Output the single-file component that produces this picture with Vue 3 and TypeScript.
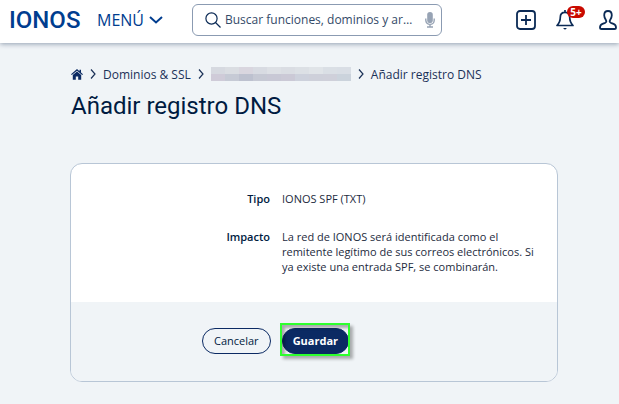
<script setup lang="ts">
import { ref } from 'vue'

const query = ref('')
const maskedCells: string[] = [
  '#d6d9e0', '#dadde2', '#d9d6df', '#d8dbe2', '#dde0e5', '#dadde3', '#dce0e5', '#e0e4e8', '#dadfe5', '#d9dee5',
  '#cfcbd8', '#c6cad5', '#bdc1cf', '#c6c9d4', '#c8c8d5', '#cbc9d6', '#cdd1dc', '#ced0da', '#cfd0da', '#cbd3dc',
]
const record: { label: string; value: string }[] = [
  { label: 'Tipo', value: 'IONOS SPF (TXT)' },
  {
    label: 'Impacto',
    value: 'La red de IONOS será identificada como el remitente legítimo de sus correos electrónicos. Si ya existe una entrada SPF, se combinarán.',
  },
]
</script>

<template>
  <div class="page">
    <header class="topbar">
      <a href="#" class="logo">IONOS</a>
      <button type="button" class="menu">
        MENÚ
        <svg width="14" height="8" viewBox="0 0 14 8"><path d="M1 1l6 5.5L13 1" fill="none" stroke="currentColor" stroke-width="2" /></svg>
      </button>
      <label class="search">
        <svg width="16" height="16" viewBox="0 0 16 16" fill="none" stroke="#0b2a55" stroke-width="1.2"><circle cx="6.5" cy="6.5" r="5.6" /><path d="M10.5 10.5l5 5" /></svg>
        <input v-model="query" type="text" aria-label="Buscar" placeholder="Buscar funciones, dominios y artículos" />
        <svg width="10" height="16" viewBox="0 0 10 16" fill="#97a3b4"><rect x="2.2" y="0" width="5.6" height="11" rx="2.8" /><path d="M.8 6.5v1.7a4.2 4.2 0 008.4 0V6.5M5 12.3V15M2 15h6" fill="none" stroke="#97a3b4" stroke-width="1.4" /></svg>
      </label>
      <nav class="actions">
        <button type="button" aria-label="Añadir">
          <svg width="20" height="20" viewBox="0 0 20 20" fill="none" stroke="currentColor" stroke-width="1.8"><rect x="1" y="1" width="18" height="18" rx="3" /><path d="M10 5v10M5 10h10" /></svg>
        </button>
        <button type="button" class="bell" aria-label="Notificaciones">
          <svg width="18" height="20" viewBox="0 0 18 20" fill="none" stroke="currentColor" stroke-width="1.7" stroke-linejoin="round"><path d="M9 0v2.3M9 2.3c-3 0-4.7 2.2-4.7 5 0 4.2-.8 5.7-3.3 8.2h16c-2.5-2.5-3.3-4-3.3-8.2 0-2.8-1.7-5-4.700-5z" /><path d="M7 18h4L9 19.7z" fill="currentColor" stroke="none" /></svg>
          <span class="badge">5+</span>
        </button>
        <button type="button" aria-label="Cuenta">
          <svg width="18" height="20" viewBox="0 0 18 20" fill="none" stroke="currentColor" stroke-width="1.8" stroke-linejoin="round"><path d="M9 1C6.500 1 5.200 2.800 5.200 5.300c0 2.300.9 3.700 1.800 5 .7 1.200.3 2-.8 2.500l-2.700 1.100C1.700 14.700 1 15.700 1 17.400c0 1 .6 1.600 1.600 1.600h12.800c1 0 1.600-.6 1.600-1.600 0-1.700-.7-2.700-2.500-3.500l-2.700-1.100c-1.100-.5-1.500-1.300-.8-2.500.9-1.300 1.800-2.700 1.800-5C12.800 2.800 11.500 1 9 1z" /></svg>
        </button>
      </nav>
    </header>

    <main class="content">
      <nav class="crumbs" aria-label="Ruta">
        <a href="#" aria-label="Inicio">
          <svg width="12" height="11" viewBox="0 0 12 11" fill="#0b2a63"><path d="M6 0L0 5.200l.8.900L6 1.700l5.200 4.400.8-.9-2-1.700V.8H8.500v1.400z" /><path d="M6 2.500L1.800 6v4.800h3V7.500h2.400v3.300h3V6z" /></svg>
        </a>
        <svg class="sep" width="6" height="10" viewBox="0 0 6 10"><path d="M1 .5L5 5 1 9.5" /></svg>
        <a href="#">Dominios &amp; SSL</a>
        <svg class="sep" width="6" height="10" viewBox="0 0 6 10"><path d="M1 .5L5 5 1 9.5" /></svg>
        <span class="masked"><i v-for="(color, i) in maskedCells" :key="i" :style="{ background: color }"></i></span>
        <svg class="sep" width="6" height="10" viewBox="0 0 6 10"><path d="M1 .5L5 5 1 9.5" /></svg>
        <span>Añadir registro DNS</span>
      </nav>
      <h1>Añadir registro DNS</h1>

      <section class="card">
        <dl class="details">
          <template v-for="row in record" :key="row.label">
            <dt>{{ row.label }}</dt>
            <dd>{{ row.value }}</dd>
          </template>
        </dl>
        <footer class="card-footer">
          <button type="button" class="btn">Cancelar</button>
          <span class="marked"><button type="button" class="btn primary">Guardar</button></span>
        </footer>
      </section>
    </main>
  </div>
</template>

<style>
body {
  background: #f0f4f7;
}
</style>

<style scoped>
* {
  box-sizing: border-box;
}
.page {
  font-family: "Open Sans", "Noto Sans", sans-serif;
  color: #001b41;
  overflow: hidden;
}
button {
  font: inherit;
  color: inherit;
  background: none;
  border: 0;
  padding: 0;
}
svg {
  display: block;
  flex: none;
}
a {
  color: inherit;
  text-decoration: none;
}
.topbar {
  display: flex;
  align-items: center;
  height: 43px;
  padding: 0 2px 4px 9px;
  background: #fff;
  box-shadow: 0 1px 5px rgba(0, 27, 65, 0.4);
}
.logo {
  width: 88px;
  font: 500 24px/28px "Roboto", sans-serif;
  color: #003d8f;
}
.menu {
  display: flex;
  align-items: center;
  gap: 5px;
  width: 95px;
  font-size: 16px;
  font-weight: 500;
  color: #003d8f;
}
.search {
  display: flex;
  align-items: center;
  gap: 4px;
  flex: 0 1 250px;
  min-width: 0;
  height: 32px;
  padding: 0 6px 0 12px;
  border: 1px solid #8b9bb2;
  border-radius: 6px;
}
.search input {
  flex: 1;
  min-width: 0;
  margin-right: 8px;
  padding: 0;
  border: 0;
  outline: 0;
  background: none;
  font: 12px/20px "Open Sans", sans-serif;
  text-overflow: ellipsis;
}
.search input::placeholder {
  color: #344a68;
  opacity: 1;
}
.actions {
  display: flex;
  gap: 20px;
  margin-left: auto;
  color: #0b2a55;
}
.bell {
  position: relative;
  margin-right: 5px;
}
.badge {
  position: absolute;
  left: 11px;
  top: -4px;
  width: 18px;
  border-radius: 6px;
  background: #c90a00;
  color: #fff;
  font-size: 10px;
  font-weight: 700;
  line-height: 12px;
}
.content {
  padding: 22px 61px 21px 70px;
}
.crumbs {
  display: flex;
  align-items: center;
  gap: 7px;
  height: 18px;
  padding-left: 1px;
  font-size: 12px;
  white-space: nowrap;
  color: #1b3157;
}
.sep {
  fill: none;
  stroke: #1b3157;
  stroke-width: 1.2;
}
.masked {
  display: grid;
  grid-template-columns: repeat(10, 14px);
  grid-auto-rows: 7px;
}
h1 {
  margin: 8px 0 42px;
  padding-left: 1px;
  font: 400 24px/30px "Roboto", sans-serif;
}
.card {
  overflow: hidden;
  border: 1px solid #b8c6d6;
  border-radius: 12px;
  background: #fff;
}
.details {
  display: grid;
  grid-template-columns: 199px 1fr;
  gap: 23px 12px;
  margin: 0;
  padding: 27px 20px 28px 0;
  font-size: 11px;
  line-height: 15px;
}
dt {
  text-align: right;
  font-weight: 600;
}
dd {
  margin: 0;
  color: #1d2b40;
}
.card-footer {
  display: flex;
  gap: 11px;
  padding: 26px 131px 27px;
  background: #f0f4f7;
}
.btn {
  height: 26px;
  padding: 0 11px 2px;
  border: 1px solid #0b2a63;
  border-radius: 13px;
  font-size: 11px;
  font-weight: 500;
}
.primary {
  background: #0b2a63;
  color: #fff;
  font-weight: 700;
}
.marked {
  display: flex;
  position: relative;
}
.marked .btn {
  padding: 0 10px 2px;
}
.marked::after {
  content: "";
  position: absolute;
  inset: -5px -1px -2px -2px;
  border: 2px solid #2eff2e;
  box-shadow: 3px 3px 3px rgba(0, 0, 0, 0.3), inset 3px 3px 3px rgba(0, 0, 0, 0.3);
}
</style>
